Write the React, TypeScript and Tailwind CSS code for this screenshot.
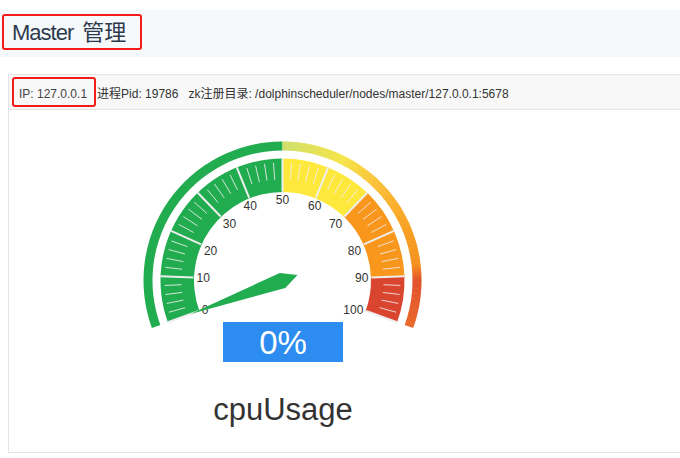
const CX = 282.5;
const CY = 281.5;

// value 0..100 -> math angle (degrees), 200 at 0 down to -20 at 100
const ang = (v: number) => 200 - v * 2.2;

function pt(r: number, a: number): [number, number] {
  const rad = (a * Math.PI) / 180;
  return [CX + r * Math.cos(rad), CY - r * Math.sin(rad)];
}

function sector(r1: number, r2: number, a0: number, a1: number) {
  const large = a0 - a1 > 180 ? 1 : 0;
  const [x0, y0] = pt(r2, a0);
  const [x1, y1] = pt(r2, a1);
  const [x2, y2] = pt(r1, a1);
  const [x3, y3] = pt(r1, a0);
  return `M${x0} ${y0}A${r2} ${r2} 0 ${large} 1 ${x1} ${y1}L${x2} ${y2}A${r1} ${r1} 0 ${large} 0 ${x3} ${y3}Z`;
}

const hex = (h: string) => [1, 3, 5].map((i) => parseInt(h.slice(i, i + 2), 16));

// outer ring colour stops from 50 to 100
const stops: [number, string][] = [
  [50, '#cfdf6b'],
  [62, '#f6e549'],
  [70, '#fbc13b'],
  [80, '#f9a223'],
  [88, '#f4911f'],
  [91, '#e2522c'],
  [100, '#e9692a'],
];

function ringColor(v: number) {
  for (let i = 0; i < stops.length - 1; i++) {
    const [va, ca] = stops[i];
    const [vb, cb] = stops[i + 1];
    if (v >= va && v <= vb) {
      const t = (v - va) / (vb - va);
      const a = hex(ca);
      const b = hex(cb);
      const c = a.map((x, k) => Math.round(x + (b[k] - x) * t));
      return `rgb(${c[0]},${c[1]},${c[2]})`;
    }
  }
  return stops[stops.length - 1][1];
}

const GREEN = '#22ac50';

function Gauge() {
  const ring: JSX.Element[] = [];
  for (let v = 50; v < 100; v += 0.5) {
    const a0 = ang(v) + (v > 50 ? 0.2 : 0);
    const a1 = ang(Math.min(100, v + 0.5));
    ring.push(<path key={v} d={sector(130, 139, a0, a1)} fill={ringColor(v + 0.25)} />);
  }

  const band: [number, number, string][] = [
    [0, 50, GREEN],
    [50, 70, '#fee83c'],
    [70, 90, '#f9961c'],
    [90, 100, '#da4530'],
  ];

  const ticks: JSX.Element[] = [];
  for (let i = 0; i <= 50; i++) {
    const a = ang(i * 2);
    if (i % 5 === 0) {
      const [x1, y1] = pt(122, a);
      const [x2, y2] = pt(89, a);
      ticks.push(<line key={i} x1={x1} y1={y1} x2={x2} y2={y2} stroke="#eeeeee" strokeWidth={2} />);
    } else {
      const [x1, y1] = pt(118, a);
      const [x2, y2] = pt(101, a);
      ticks.push(
        <line key={i} x1={x1} y1={y1} x2={x2} y2={y2} stroke="#eeeeee" strokeOpacity={0.85} strokeWidth={1} />
      );
    }
  }

  const labels = Array.from({ length: 11 }, (_, i) => {
    const v = i * 10;
    const a = ang(v);
    const ux = Math.cos((a * Math.PI) / 180);
    const uy = -Math.sin((a * Math.PI) / 180);
    const [x, y] = pt(86, a);
    const anchor = ux < -0.4 ? 'start' : ux > 0.4 ? 'end' : 'middle';
    const by = uy < -0.4 ? y + 9.5 : uy > 0.4 ? y - 1 : y + 4.3;
    return (
      <text key={v} x={x} y={by} textAnchor={anchor} fontSize={12} fill="#333">
        {v}
      </text>
    );
  });

  // pointer kite, pointing at value 0
  const pa = ang(0);
  const rad = (pa * Math.PI) / 180;
  const dx = Math.cos(rad);
  const dy = -Math.sin(rad);
  const px = -dy;
  const py = dx;
  const w = 8;
  const pts = [
    [CX - dx * w * 2, CY - dy * w * 2],
    [CX + px * w, CY + py * w],
    [CX + dx * 98, CY + dy * 98],
    [CX - px * w, CY - py * w],
  ]
    .map((p) => p.join(','))
    .join(' ');

  return (
    <svg width={548} height={212} viewBox="9 111 548 212" className="block overflow-visible">
      <path d={sector(130, 139, ang(0), ang(50))} fill={GREEN} />
      {ring}
      {band.map(([a, b, c]) => (
        <path key={a} d={sector(88.5, 122, ang(a), ang(b))} fill={c} />
      ))}
      {ticks}
      {labels}
      <polygon points={pts} fill={GREEN} />
    </svg>
  );
}

export default function App() {
  return (
    <div className="w-[680px] h-[458px] overflow-hidden bg-white pt-[10px] font-['Liberation_Sans','Noto_Sans_CJK_SC',sans-serif]">
      {/* page title */}
      <div className="h-[47px] bg-[#f6f9fc] flex items-start pl-[2px]">
        <div className="mt-[4px] h-[36px] w-[140px] flex items-center border-2 border-[#f21c1c] rounded-[3px] pl-[8px] pt-[1px] text-[22px] tracking-[-1px] text-[#2c3a4c]">
          <span>Master</span>
          <span className="ml-[9px] tracking-normal">管理</span>
        </div>
      </div>

      {/* master card */}
      <div className="mt-[17px] ml-[8px] w-[700px] h-[379px] border border-[#e4e4e4]">
        <div className="h-[35px] bg-[#f8f8f8] border-b border-[#e4e4e4] flex items-center pl-[3px] text-[12px] text-[#333] whitespace-nowrap">
          <span className="h-[30px] inline-flex items-center border-2 border-[#f21c1c] rounded-[3px] pl-[5px] pr-[7px] pt-[3px] text-[#444]">
            IP: 127.0.0.1
          </span>
          <span className="ml-[1px] mr-[10px] pt-[3px]">进程Pid: 19786</span>
          <span className="pt-[3px]">zk注册目录: /dolphinscheduler/nodes/master/127.0.0.1:5678</span>
        </div>

        <div className="w-[548px] flex flex-col items-center">
          <Gauge />
          <div className="w-[120px] h-[40px] bg-[#2d8cf0] text-white text-[33px] leading-none flex items-center justify-center">
            0%
          </div>
          <div className="mt-[32px] text-[31px] leading-[31px] text-[#333]">cpuUsage</div>
        </div>
      </div>
    </div>
  );
}
